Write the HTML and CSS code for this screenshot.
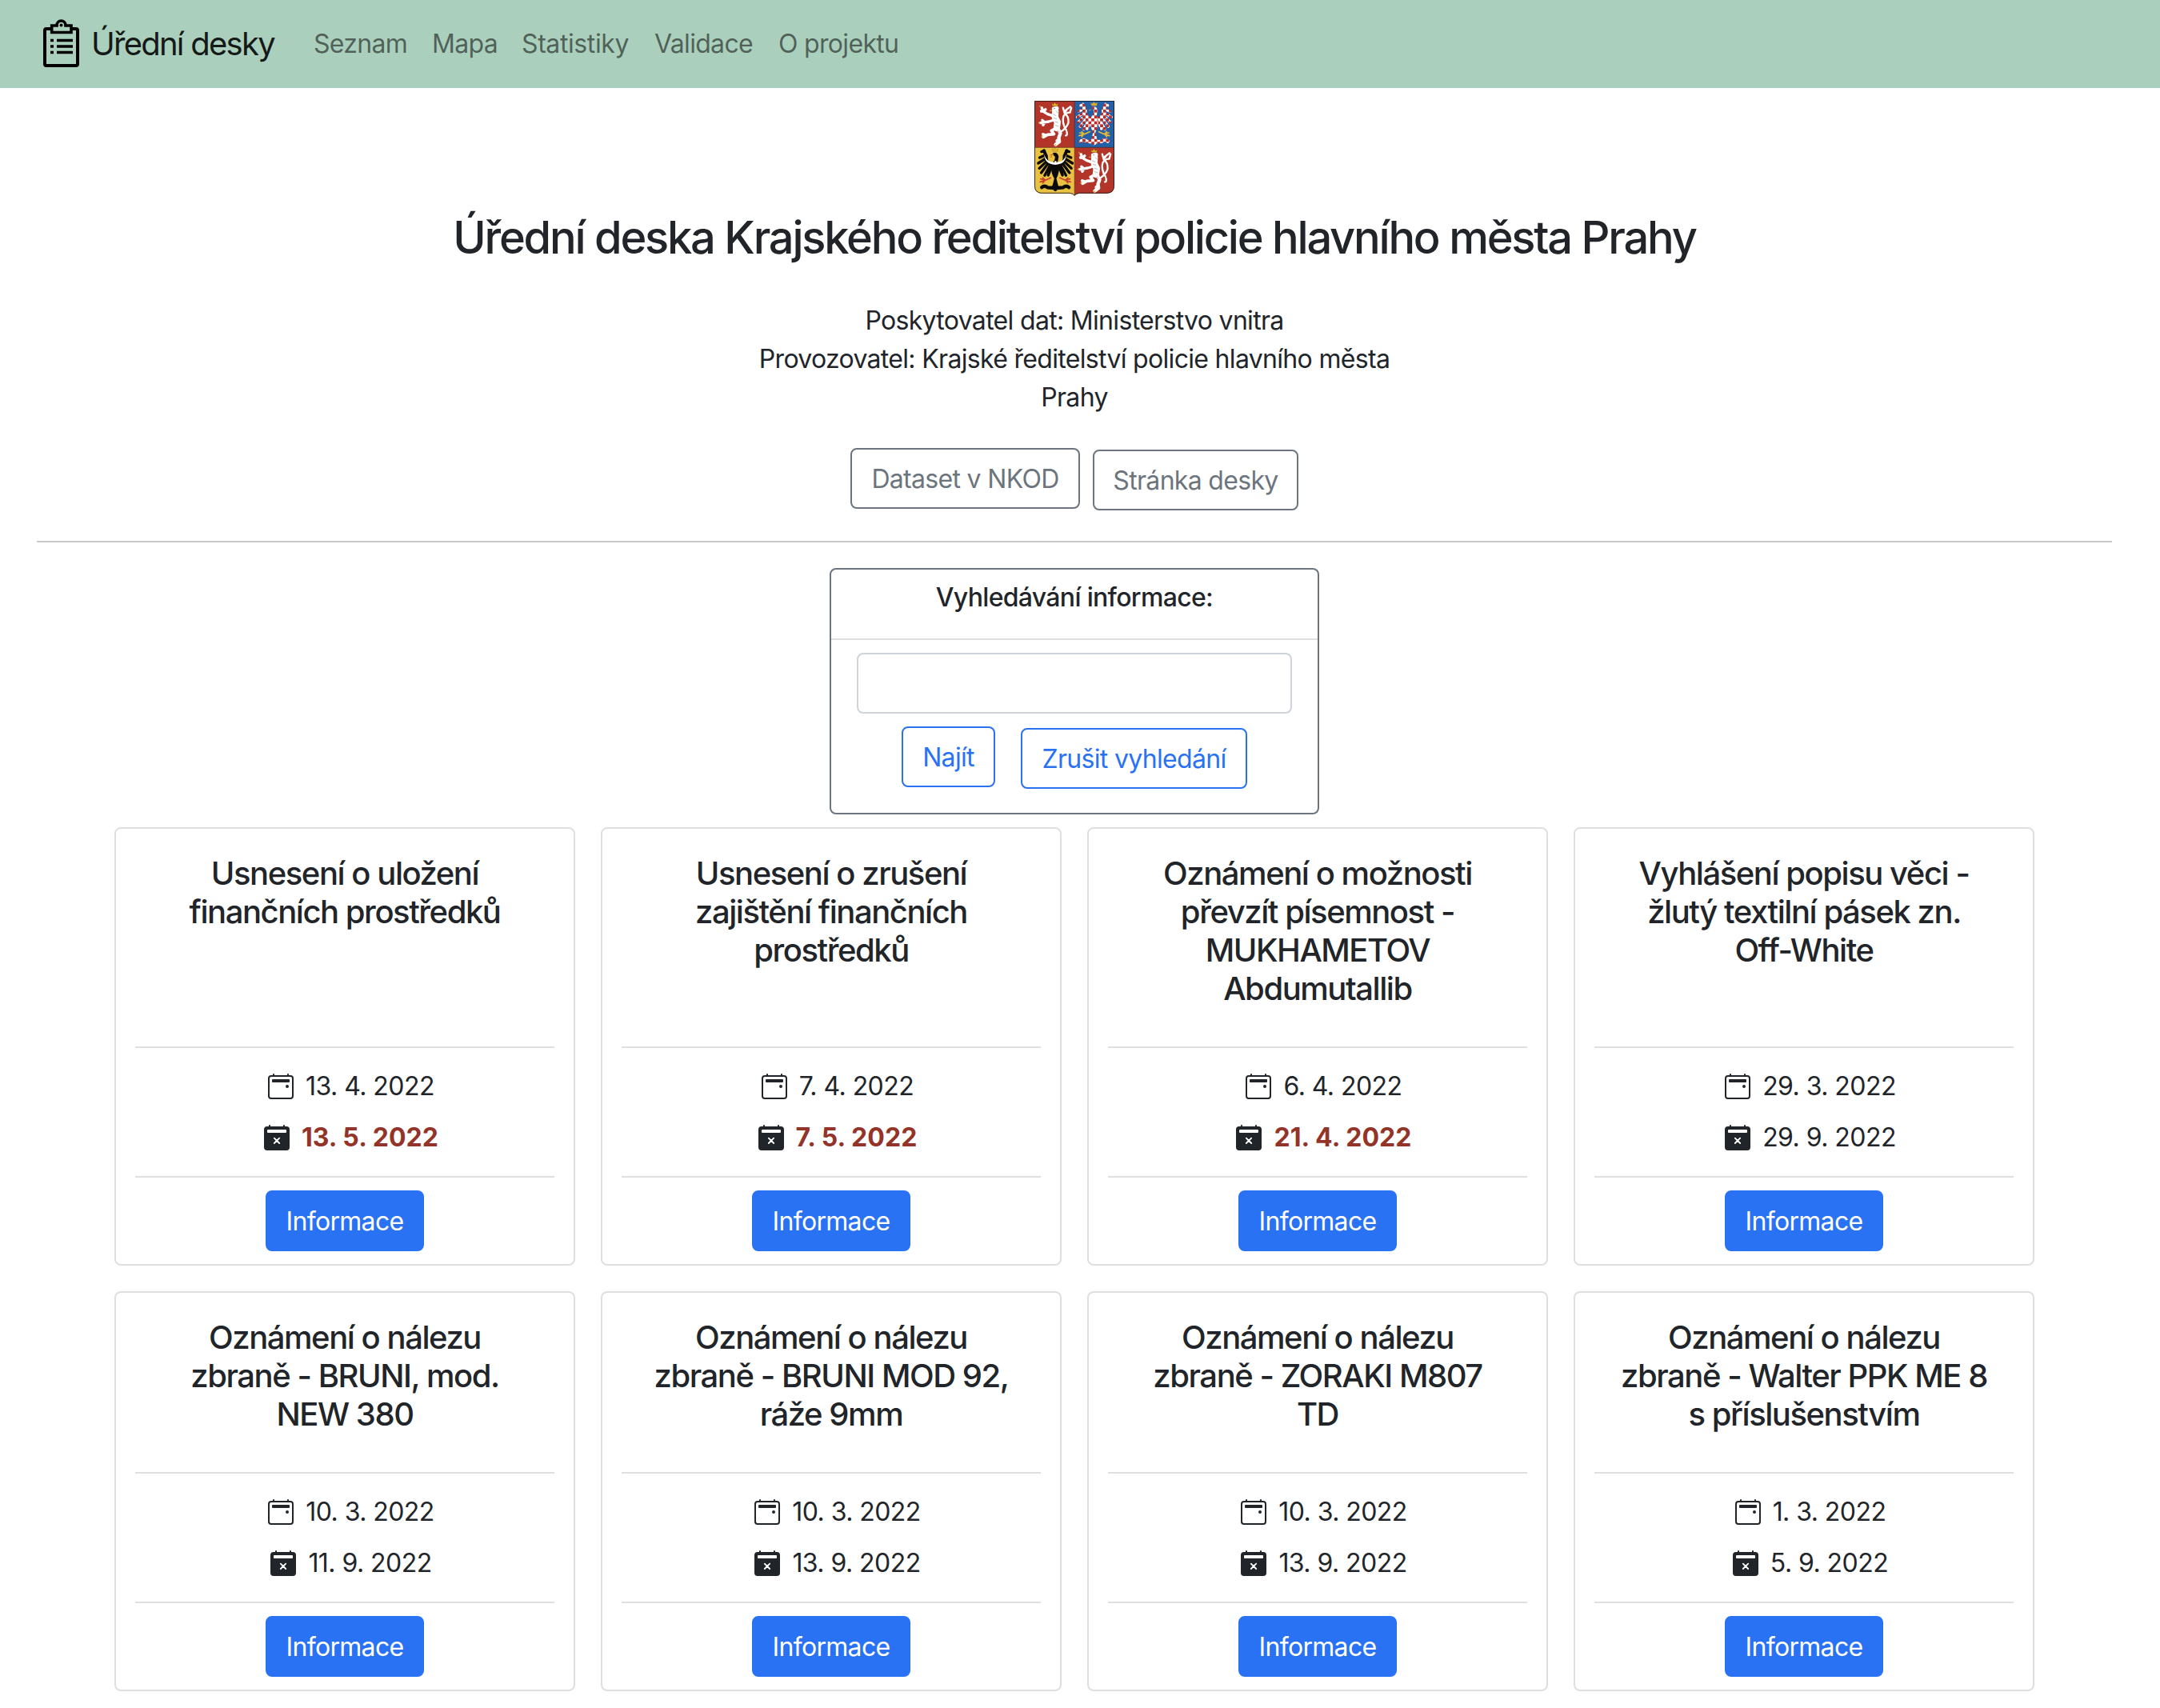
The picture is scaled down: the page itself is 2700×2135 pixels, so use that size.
FILE: index.html
```html
<!DOCTYPE html>
<html lang="cs">
<head>
<meta charset="utf-8">
<title>Úřední desky</title>
<link rel="stylesheet" href="styles.css">
</head>
<body>
<svg class="sprite" aria-hidden="true">
  <symbol id="cal" viewBox="0 0 16 16">
    <path d="M3.5 0a.5.5 0 0 1 .5.5V1h8V.5a.5.5 0 0 1 1 0V1h1a2 2 0 0 1 2 2v11a2 2 0 0 1-2 2H2a2 2 0 0 1-2-2V3a2 2 0 0 1 2-2h1V.5a.5.5 0 0 1 .5-.5zM2 2a1 1 0 0 0-1 1v11a1 1 0 0 0 1 1h12a1 1 0 0 0 1-1V3a1 1 0 0 0-1-1H2z"/>
    <path d="M2.500 4a.5.5 0 0 1 .5-.5h10a.5.5 0 0 1 .5.5v1a.5.5 0 0 1-.5.5H3a.5.5 0 0 1-.5-.5V4z"/>
    <circle cx="12" cy="8" r="1"/>
  </symbol>
  <symbol id="calx" viewBox="0 0 16 16">
    <path fill-rule="evenodd" d="M3.5 0a.5.5 0 0 1 .5.5V1h8V.5a.5.5 0 0 1 1 0V1h1a2 2 0 0 1 2 2v11a2 2 0 0 1-2 2H2a2 2 0 0 1-2-2V3a2 2 0 0 1 2-2h1V.5a.5.5 0 0 1 .5-.5zM2.5 3a.5.5 0 0 0-.5.5v1a.5.5 0 0 0 .5.5h11a.5.5 0 0 0 .5-.5v-1a.5.5 0 0 0-.5-.5z"/>
    <path d="M6.4 8.3l3.2 3.2M9.6 8.3l-3.2 3.2" stroke="#fff" stroke-width=".9" stroke-linecap="round"/>
  </symbol>
</svg>

<nav class="navbar">
  <a class="brand">
    <svg class="brand-icon" viewBox="0 0 46 60" fill="none" stroke="#000">
      <path d="M9 12H4a2 2 0 0 0-2 2v42a2 2 0 0 0 2 2h37a2 2 0 0 0 2-2V14a2 2 0 0 0-2-2h-5" stroke-width="4"/>
      <path d="M10.700 8H17c0-8 11-8 11 0h7v8.500H10.700z" stroke-width="3.600"/>
      <circle cx="22.500" cy="7.500" r="2" fill="#000" stroke="none"/>
      <path d="M9 26.500h4M17 26.500h20M9 34h4M17 34h20M9 41.500h4M17 41.500h20" stroke-width="3.400"/>
    </svg>
    <span class="brand-name">Úřední desky</span>
  </a>
  <div class="nav-links"><a class="l1">Seznam</a><a class="l2">Mapa</a><a class="l3">Statistiky</a><a class="l4">Validace</a><a>O projektu</a></div>
</nav>

<main class="page">
  <svg class="emblem" viewBox="68.500 48 300 357">
    <defs>
      <pattern id="check" width="22" height="22" patternUnits="userSpaceOnUse" x="282" y="92">
        <rect width="22" height="22" fill="#fff"/><path d="M0 0h11v11H0zM11 11h11v11H11z" fill="#c02a24"/>
      </pattern>
      <clipPath id="shield"><path d="M69 48H368V368Q368 393 342 395H238Q224 396 219 404Q214 396 200 395H95Q69 393 69 368Z"/></clipPath>
      <g id="lion-shape" fill="none" stroke-linecap="round" stroke-linejoin="round">
        <path d="M147 86L146 110L155 128L152 150" stroke-width="25"/>
        <path d="M142 78L152 76" stroke-width="16"/>
        <path d="M136 104L118 98L102 88L96 74M94 87L103 88M110 80L104 88" stroke-width="10"/>
        <path d="M142 120L122 126L92 131M108 128L101 139M104 126L98 121" stroke-width="10"/>
        <path d="M148 152L132 160L142 173L118 175L102 184M110 177L101 174" stroke-width="11"/>
        <path d="M156 150L166 170L160 186L162 201L148 212M160 202L154 198" stroke-width="13"/>
        <path d="M166 165Q190 150 196 130Q198 105 182 96L176 74M182 94L192 78M180 88L203 70M190 164Q193 180 186 178" stroke-width="7"/>
        <path d="M188 158Q170 130 178 105Q190 90 202 92L207 74" stroke-width="7"/>
      </g>
      <g id="lion">
        <use href="#lion-shape" stroke="#fff"/>
        <path d="M138 98l12 6M140 112l13 4M146 126l12 4M146 140l13 3M150 86l7 8M155 160l8 6" stroke="#8b8b8b" stroke-width="1.800" fill="none"/>
        <path d="M136 67l-2-10 6 5 5-8 5 8 7-4-2 10z" fill="#e6b52c" stroke="#7d5817"/>
        <path d="M133 84l-6 2M90 66l-1 5M84 132l4-5M94 184l5-5M144 216l6-4" stroke="#e2b22e" stroke-width="4"/>
        <path d="M142 77h4" stroke="#222" stroke-width="2"/>
      </g>
      <g id="wing" fill="none" stroke-linecap="round">
        <path d="M283 116Q256 112 259 82L250 62" stroke-width="12"/>
        <path d="M252 64L241 66M255 79L234 88M258 91L229 109M261 101L233 128M266 110L240 145M274 116L253 155M281 118L266 154" stroke-width="10"/>
      </g>
      <g id="eagle">
        <use href="#wing"/><use href="#wing" transform="translate(586 0) scale(-1 1)"/>
        <path d="M286 78Q296 72 299 84L296 102" stroke-width="13" fill="none"/>
        <path d="M293 94Q308 108 308 130Q304 155 297 166L303 190H283L289 166Q278 150 278 130Q278 108 293 94Z" stroke="none"/>
        <path d="M293 188L283 202L264 200Q252 190 242 200M293 188L303 202L322 200Q334 190 344 200M293 188V208" stroke-width="13" fill="none" stroke-linecap="round"/>
      </g>
      <g id="claws" fill="none" stroke-width="5" stroke-linecap="round">
        <path d="M276 164L258 172L238 168M254 172L246 164M256 173L236 179M252 175L246 183M310 164L328 172L348 168M332 172L340 164M330 173L350 179M334 175L340 183"/>
      </g>
    </defs>
    <g clip-path="url(#shield)">
      <rect x="69" y="48" width="300" height="357" fill="#b3352a"/>
      <rect x="219" y="48" width="150" height="175" fill="#2460a5"/>
      <rect x="69" y="223" width="150" height="182" fill="#e9c243"/>
      <use href="#lion"/>
      <use href="#lion" x="147" y="174"/>
      <g fill="url(#check)" stroke="url(#check)"><use href="#eagle"/></g>
      <use href="#claws" stroke="#e3b836"/>
      <path d="M281 81l-8 3M284 65l-3-8 6 3 5-7 4 7 7-4-2 10z" fill="#e6b52c" stroke="#d2a22b" stroke-width="3"/>
      <g transform="translate(-146 173)">
        <g fill="#0b0a08" stroke="#0b0a08"><use href="#eagle"/></g>
        <use href="#claws" stroke="#c6402b"/>
        <path d="M252 76Q251 112 293 115Q335 112 333 76Q329 104 297 106V101H290V106Q257 104 252 76Z" fill="#fff"/>
        <path d="M283 77l-9 2M281 83l-6 4" stroke="#c6402b" stroke-width="3"/>
        <path d="M284 65l-4-10 7 4 5-6 5 6 7-4-3 10z" fill="#e3b52d" stroke="#8c6819"/>
      </g>
      <path d="M219 48V404M69 223H368" stroke="#34201a" stroke-width="1.500"/>
    </g>
    <path d="M70 49H367V368Q367 392 342 394H238Q224 395 219 403Q214 395 200 394H95Q70 392 70 368Z" fill="none" stroke="#161311" stroke-width="2.500"/>
  </svg>
  <h1 class="title">Úřední deska Krajského ředitelství policie hlavního města Prahy</h1>
  <p class="meta">Poskytovatel dat: Ministerstvo vnitra<br>Provozovatel: Krajské ředitelství policie hlavního města<br>Prahy</p>
  <div class="actions">
    <a class="btn btn-gray w-dataset">Dataset v NKOD</a>
    <a class="btn btn-gray w-page lower">Stránka desky</a>
  </div>
  <hr class="divider">

  <form class="search">
    <div class="search-head">Vyhledávání informace:</div>
    <div class="search-body">
      <input class="search-input" type="text" aria-label="Vyhledávání">
      <div class="search-buttons">
        <a class="btn btn-blue w-find">Najít</a>
        <a class="btn btn-blue w-clear lower">Zrušit vyhledání</a>
      </div>
    </div>
  </form>

  <section class="cards">
    <article class="card">
      <h2 class="card-title">Usnesení o uložení<br>finančních prostředků</h2>
      <div class="dates"><div class="date"><svg class="icon"><use href="#cal"/></svg>13. 4. 2022</div><div class="date"><svg class="icon"><use href="#calx"/></svg><b>13. 5. 2022</b></div></div>
      <a class="btn btn-info">Informace</a>
    </article>
    <article class="card">
      <h2 class="card-title">Usnesení o zrušení<br>zajištění finančních<br>prostředků</h2>
      <div class="dates"><div class="date"><svg class="icon"><use href="#cal"/></svg>7. 4. 2022</div><div class="date"><svg class="icon"><use href="#calx"/></svg><b>7. 5. 2022</b></div></div>
      <a class="btn btn-info">Informace</a>
    </article>
    <article class="card">
      <h2 class="card-title">Oznámení o možnosti<br>převzít písemnost -<br>MUKHAMETOV<br>Abdumutallib</h2>
      <div class="dates"><div class="date"><svg class="icon"><use href="#cal"/></svg>6. 4. 2022</div><div class="date"><svg class="icon"><use href="#calx"/></svg><b>21. 4. 2022</b></div></div>
      <a class="btn btn-info">Informace</a>
    </article>
    <article class="card">
      <h2 class="card-title">Vyhlášení popisu věci -<br>žlutý textilní pásek zn.<br>Off-White</h2>
      <div class="dates"><div class="date"><svg class="icon"><use href="#cal"/></svg>29. 3. 2022</div><div class="date"><svg class="icon"><use href="#calx"/></svg>29. 9. 2022</div></div>
      <a class="btn btn-info">Informace</a>
    </article>
    <article class="card">
      <h2 class="card-title">Oznámení o nálezu<br>zbraně - BRUNI, mod.<br>NEW 380</h2>
      <div class="dates"><div class="date"><svg class="icon"><use href="#cal"/></svg>10. 3. 2022</div><div class="date"><svg class="icon"><use href="#calx"/></svg>11. 9. 2022</div></div>
      <a class="btn btn-info">Informace</a>
    </article>
    <article class="card">
      <h2 class="card-title">Oznámení o nálezu<br>zbraně - BRUNI MOD 92,<br>ráže 9mm</h2>
      <div class="dates"><div class="date"><svg class="icon"><use href="#cal"/></svg>10. 3. 2022</div><div class="date"><svg class="icon"><use href="#calx"/></svg>13. 9. 2022</div></div>
      <a class="btn btn-info">Informace</a>
    </article>
    <article class="card">
      <h2 class="card-title">Oznámení o nálezu<br>zbraně - ZORAKI M807<br>TD</h2>
      <div class="dates"><div class="date"><svg class="icon"><use href="#cal"/></svg>10. 3. 2022</div><div class="date"><svg class="icon"><use href="#calx"/></svg>13. 9. 2022</div></div>
      <a class="btn btn-info">Informace</a>
    </article>
    <article class="card">
      <h2 class="card-title">Oznámení o nálezu<br>zbraně - Walter PPK ME 8<br>s příslušenstvím</h2>
      <div class="dates"><div class="date"><svg class="icon"><use href="#cal"/></svg>1. 3. 2022</div><div class="date"><svg class="icon"><use href="#calx"/></svg>5. 9. 2022</div></div>
      <a class="btn btn-info">Informace</a>
    </article>
  </section>
</main>
</body>
</html>
```

FILE: styles.css
```css
* { box-sizing: border-box; }

body {
  margin: 0;
  background: #fff;
  color: #212529;
  font: 400 32px/48px Inter, "Liberation Sans", sans-serif;
  letter-spacing: -0.68px;
}

.sprite { display: none; }

.navbar {
  display: flex;
  align-items: center;
  height: 110px;
  padding-left: 54px;
  background: #abcfbd;
}
.brand { display: flex; align-items: center; width: 338px; }
.brand-icon { width: 46px; height: 60px; margin-bottom: 2px; }
.brand-name {
  margin-left: 14px;
  font-size: 40px;
  line-height: 60px;
  color: rgba(0, 0, 0, .9);
  letter-spacing: -1.75px;
  white-space: nowrap;
}
.nav-links { display: flex; color: rgba(0, 0, 0, .55); white-space: nowrap; }
.l1 { width: 148px; }
.l2 { width: 112px; }
.l3 { width: 166px; letter-spacing: -0.4px; }
.l4 { width: 155px; }

.page {
  display: flex;
  flex-direction: column;
  align-items: center;
  width: 2686px;
  padding: 16px 46px 0;
}
.emblem { display: block; width: 100px; height: 119px; }
.title {
  margin: 19px 0 0;
  font-size: 56px;
  line-height: 67px;
  font-weight: 500;
  letter-spacing: -2.23px;
  white-space: nowrap;
}
.meta { margin: 46px 0 0; text-align: center; white-space: nowrap; }

.actions { display: flex; gap: 16px; margin-top: 39px; }
.btn {
  display: flex;
  align-items: center;
  justify-content: center;
  height: 76px;
  padding-top: 2px;
  border: 2px solid;
  border-radius: 8px;
  white-space: nowrap;
}
.lower { margin-top: 2px; }
.btn-gray { color: #6c757d; }
.btn-blue { color: #2a72f4; }
.btn-info { width: 198px; color: #fff; background: #2a72f4; border-color: #2a72f4; }
.w-dataset { width: 287px; }
.w-page { width: 257px; }
.w-find { width: 117px; }
.w-clear { width: 283px; }

.divider {
  align-self: stretch;
  height: 2px;
  margin: 38px 0 32px;
  border: 0;
  background: #c8c9ca;
}

.search {
  width: 612px;
  height: 308px;
  border: 2px solid #6c757d;
  border-radius: 8px;
}
.search-head {
  height: 88px;
  padding-top: 11px;
  border-bottom: 2px solid #dfdfdf;
  font-weight: 500;
  text-align: center;
}
.search-body { padding: 16px 32px; }
.search-input {
  display: block;
  width: 100%;
  height: 76px;
  border: 2px solid #ced4da;
  border-radius: 8px;
  background: #fff;
}
.search-buttons { display: flex; justify-content: center; gap: 32px; margin-top: 16px; }

.cards {
  display: grid;
  grid-template-columns: repeat(4, 576px);
  gap: 32px;
  margin-top: 16px;
}
.card {
  display: flex;
  flex-direction: column;
  align-items: center;
  padding: 32px 24px 16px;
  border: 2px solid #dfdfdf;
  border-radius: 8px;
}
.card-title {
  flex: 1;
  margin: 0 0 48px;
  font-size: 40px;
  line-height: 48px;
  font-weight: 500;
  letter-spacing: -1.45px;
  text-align: center;
  white-space: nowrap;
}
.dates {
  display: flex;
  flex-direction: column;
  gap: 16px;
  align-self: stretch;
  margin-bottom: 16px;
  padding: 24px 0;
  border-top: 2px solid #dfdfdf;
  border-bottom: 2px solid #dfdfdf;
}
.date { display: flex; align-items: center; justify-content: center; letter-spacing: -0.55px; }
.date b { color: #943429; letter-spacing: 0.1px; }
.icon { width: 32px; height: 32px; margin: 0 15px 0 16px; fill: #212529; }
```
